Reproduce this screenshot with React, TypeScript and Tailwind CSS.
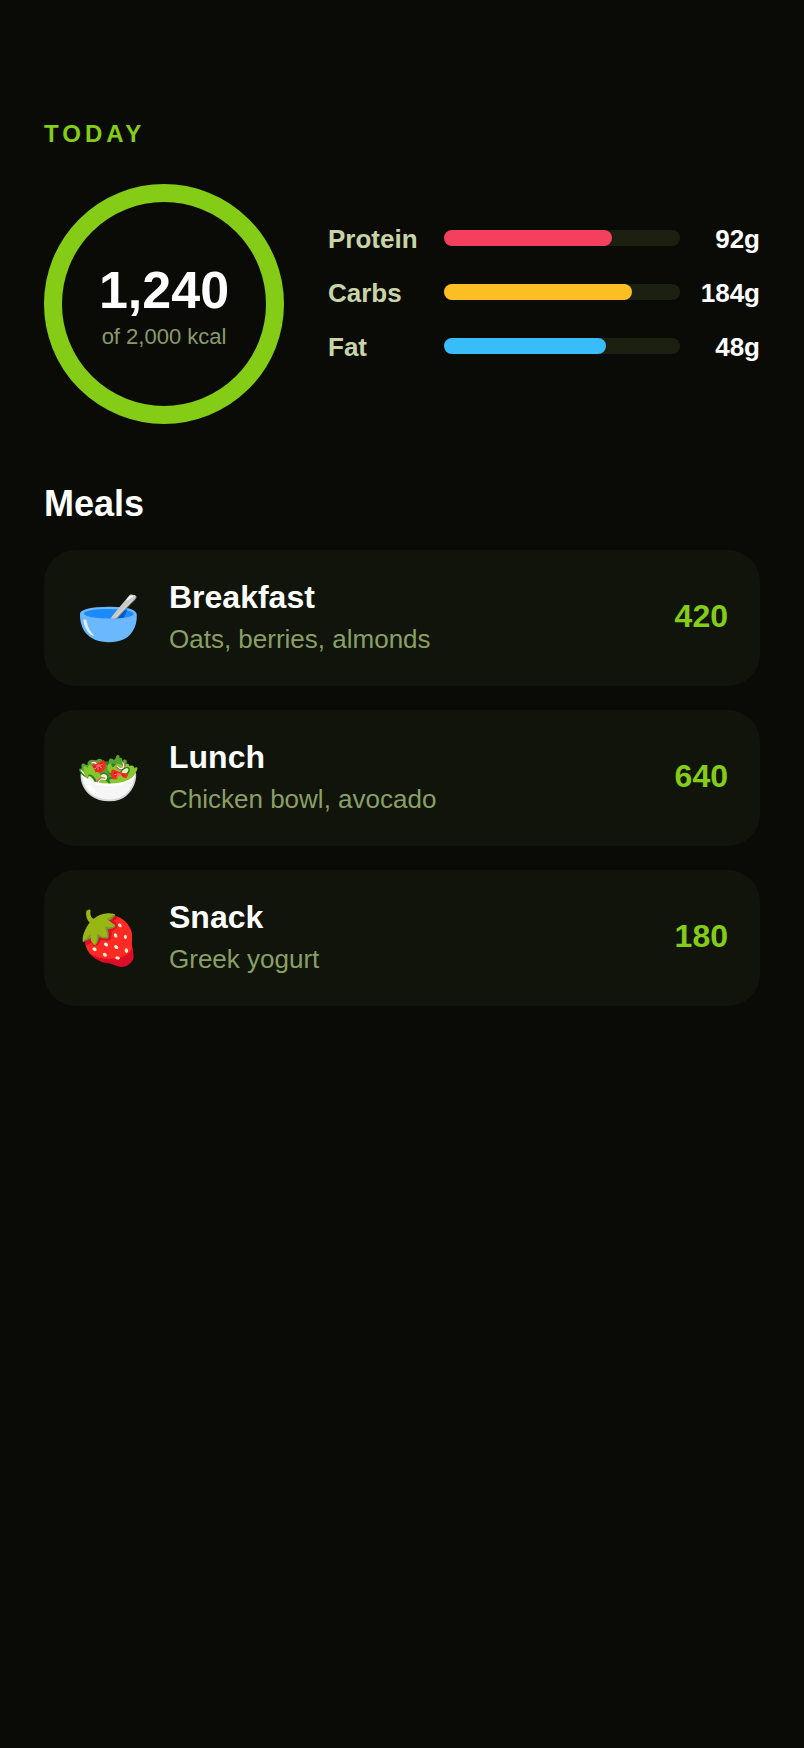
const macros = [
  { name: 'Protein', value: '92g', pct: 'w-[71%]', color: 'bg-[#f43f5e]' },
  { name: 'Carbs', value: '184g', pct: 'w-[79.5%]', color: 'bg-[#fbbf24]' },
  { name: 'Fat', value: '48g', pct: 'w-[68.5%]', color: 'bg-[#38bdf8]' },
];

const meals = [
  { emoji: '🥣', name: 'Breakfast', desc: 'Oats, berries, almonds', kcal: 420 },
  { emoji: '🥗', name: 'Lunch', desc: 'Chicken bowl, avocado', kcal: 640 },
  { emoji: '🍓', name: 'Snack', desc: 'Greek yogurt', kcal: 180 },
];

export default function App() {
  return (
    <div className="min-h-[1748px] bg-[#0a0b06] px-11 pt-[120px] font-['Liberation_Sans',sans-serif] text-white">
      <div className="text-[24px] leading-[28px] font-bold tracking-[4px] text-[#84cc16]">TODAY</div>

      <div className="mt-9 flex items-center gap-11">
        <div className="flex h-60 w-60 shrink-0 flex-col items-center justify-center rounded-full border-[18px] border-[#84cc16] pt-[3px]">
          <div className="text-[52px] leading-[60px] font-bold">1,240</div>
          <div className="mt-[3px] text-[22px] leading-7 text-[#8a9a6b]">of 2,000 kcal</div>
        </div>
        <div className="flex min-w-0 flex-1 flex-col gap-6 pb-6">
          {macros.map((m) => (
            <div key={m.name} className="flex h-[30px] items-center">
              <div className="w-[116px] pt-0.5 text-[26px] font-bold text-[#c8d4a8]">{m.name}</div>
              <div className="h-4 w-[236px] rounded-full bg-[#1c2010]">
                <div className={`h-4 rounded-full ${m.pct} ${m.color}`} />
              </div>
              <div className="flex-1 pt-0.5 text-right text-[26px] font-bold">{m.value}</div>
            </div>
          ))}
        </div>
      </div>

      <div className="mt-[58px] text-[36px] leading-[44px] font-bold">Meals</div>

      <div className="mt-6 flex flex-col gap-6">
        {meals.map((meal) => (
          <div key={meal.name} className="flex h-[136px] items-center gap-7 rounded-[32px] bg-[#10140a] px-8">
            <div className="w-[65px] text-center text-[52px] leading-none">{meal.emoji}</div>
            <div className="min-w-0 flex-1 pb-0.5">
              <div className="text-[32px] leading-[40px] font-bold">{meal.name}</div>
              <div className="mt-1 text-[26px] leading-[36px] text-[#8a9f64]">{meal.desc}</div>
            </div>
            <div className="pb-[5px] text-[32px] font-bold text-[#84cc16]">{meal.kcal}</div>
          </div>
        ))}
      </div>
    </div>
  );
}
